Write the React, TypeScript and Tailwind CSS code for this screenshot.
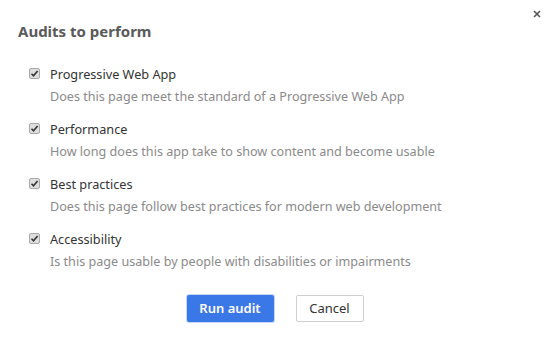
import React from "react";

const items = [
  { label: "Progressive Web App", desc: "Does this page meet the standard of a Progressive Web App" },
  { label: "Performance", desc: "How long does this app take to show content and become usable" },
  { label: "Best practices", desc: "Does this page follow best practices for modern web development" },
  { label: "Accessibility", desc: "Is this page usable by people with disabilities or impairments" },
];

function Check() {
  return (
    <span className="mt-[3px] flex h-[11px] w-[11px] shrink-0 items-center justify-center rounded-[2px] border border-[#a9a9a9] bg-[#dedede]">
      <svg width="9" height="9" viewBox="0 0 9 9">
        <path d="M1.5 4.8 L3.5 6.8 L7.6 2" fill="none" stroke="#333" strokeWidth="1.6" />
      </svg>
    </span>
  );
}

export default function App() {
  return (
    <div className="relative h-[344px] w-[552px] bg-white" style={{ fontFamily: '"Noto Sans", "Open Sans", sans-serif' }}>
      <button className="absolute right-[8px] top-[7px] flex h-[14px] w-[14px] items-center justify-center">
        <svg width="10" height="10" viewBox="0 0 10 10">
          <path d="M2 2 L8 8 M8 2 L2 8" stroke="#555" strokeWidth="1.6" />
        </svg>
      </button>
      <div className="px-[18px] pt-[20px]">
        <h1 className="text-[15px] font-bold leading-[22px] text-[#5a5a5a]">Audits to perform</h1>
        <div className="mt-[23px] flex flex-col gap-[14px] pl-[11px]">
          {items.map((it) => (
            <div key={it.label} className="flex gap-[10px]">
              <Check />
              <div className="flex flex-col">
                <span className="text-[12.7px] leading-[18px] text-[#333]">{it.label}</span>
                <span className="mt-[5px] text-[12.6px] leading-[18px] text-[#8a8a8a]">{it.desc}</span>
              </div>
            </div>
          ))}
        </div>
        <div className="mt-[24px] flex justify-center gap-[22px] pr-[2px]">
          <button className="h-[27px] w-[87px] rounded-[2px] bg-[#3b78e7] text-[13px] font-semibold text-white shadow-[0_0_0_1px_#c5d8fb]">
            Run audit
          </button>
          <button className="h-[27px] w-[68px] rounded-[2px] border border-[#cfcfcf] bg-white text-[13px] text-[#333]">
            Cancel
          </button>
        </div>
      </div>
    </div>
  );
}
